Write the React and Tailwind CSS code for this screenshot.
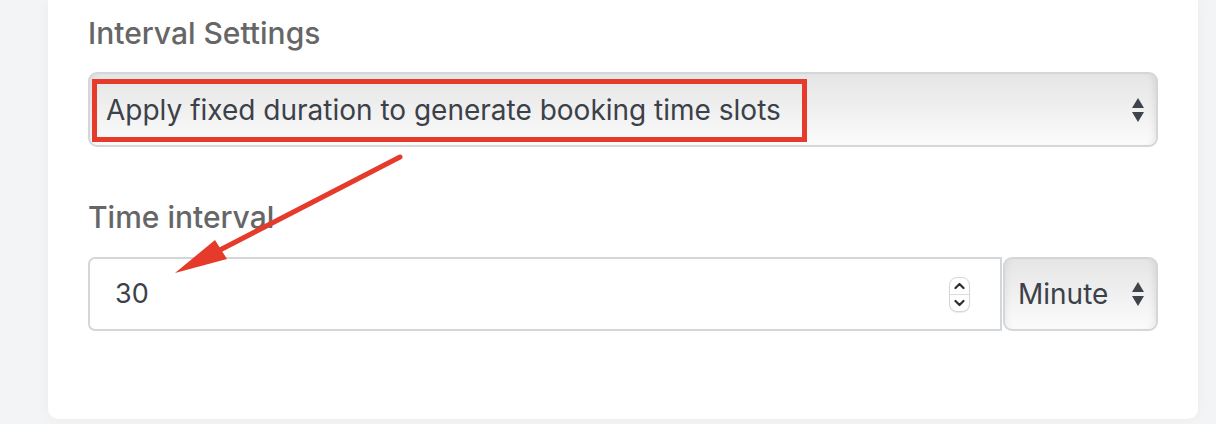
import React from 'react';

const SelectArrows = () => (
  <div className="flex flex-col items-center gap-[4px]">
    <svg width="12" height="10" viewBox="0 0 12 10">
      <path d="M6 0 L12 10 L0 10 Z" fill="#3f444c" />
    </svg>
    <svg width="12" height="10" viewBox="0 0 12 10">
      <path d="M0 0 L12 0 L6 10 Z" fill="#3f444c" />
    </svg>
  </div>
);

const NumberSpinner = () => (
  <div className="flex h-[35px] w-[21px] flex-col items-center rounded-[8px] border border-[#d6d6d6] bg-white shadow-[0_1px_1px_rgba(0,0,0,0.08)]">
    <div className="flex w-full flex-1 items-center justify-center border-b border-[#dcdcdc]">
      <svg width="11" height="8" viewBox="0 0 11 8">
        <path d="M1.5 6 L5.5 2 L9.5 6" fill="none" stroke="#2a2e33" strokeWidth="2.2" strokeLinecap="round" strokeLinejoin="round" />
      </svg>
    </div>
    <div className="flex w-full flex-1 items-center justify-center">
      <svg width="11" height="8" viewBox="0 0 11 8">
        <path d="M1.5 2 L5.5 6 L9.5 2" fill="none" stroke="#2a2e33" strokeWidth="2.2" strokeLinecap="round" strokeLinejoin="round" />
      </svg>
    </div>
  </div>
);

const App = () => {
  const font = { fontFamily: 'Inter, "Noto Sans", "Liberation Sans", sans-serif' };

  return (
    <div className="min-h-[424px] bg-[#f3f4f6] pl-12 pr-[18px] pb-[5px]" style={font}>
      <div className="relative rounded-b-[10px] bg-white px-10 pt-[13px] pb-[88px] shadow-[0_0_14px_rgba(0,0,0,0.04)]">
        {/* Interval settings */}
        <div className="mb-[19px] h-[40px] text-[30px] font-medium leading-[40px] text-[#666666]">Interval Settings</div>
        <div className="relative flex h-[75px] items-center justify-between rounded-[9px] border-2 border-[#d3d6da] bg-gradient-to-b from-[#e5e5e5] to-[#fbfbfb] pl-[16px] pr-[12px] shadow-[inset_-6px_0_6px_-4px_rgba(0,0,0,0.08),inset_6px_0_6px_-4px_rgba(0,0,0,0.05)]">
          <span className="text-[28px] text-[#3c4149]">Apply fixed duration to generate booking time slots</span>
          <SelectArrows />
          <div className="pointer-events-none absolute left-[2px] top-[5px] h-[63px] w-[715px] border-[5px] border-[#e63a2b]" />
        </div>

        {/* Time interval */}
        <div className="mt-[50px] mb-[20px] h-[40px] text-[30px] font-medium leading-[40px] text-[#666666]">Time interval</div>
        <div className="flex h-[74px] gap-px">
          <div className="flex flex-1 items-center justify-between rounded-l-[7px] border-2 border-[#d3d6da] bg-white pl-[25px] pr-[30px]">
            <span className="text-[27px] text-[#3c4149]">30</span>
            <NumberSpinner />
          </div>
          <div className="flex w-[155px] items-center justify-between rounded-[9px] border-2 border-[#d3d6da] bg-gradient-to-b from-[#e5e5e5] to-[#fbfbfb] pl-[13px] pr-[12px] shadow-[inset_-6px_0_6px_-4px_rgba(0,0,0,0.08),inset_6px_0_6px_-4px_rgba(0,0,0,0.05)]">
            <span className="text-[28px] text-[#3c4149]">Minute</span>
            <SelectArrows />
          </div>
        </div>

        {/* annotation arrow */}
        <svg className="pointer-events-none absolute left-0 top-0" width="1150" height="419" viewBox="0 0 1150 419">
          <line x1="352" y1="157" x2="170" y2="251" stroke="#e63a2b" strokeWidth="5" strokeLinecap="round" />
          <path d="M127 273 L167 240 L179 259 Z" fill="#e63a2b" />
        </svg>
      </div>
    </div>
  );
};

export default App;
